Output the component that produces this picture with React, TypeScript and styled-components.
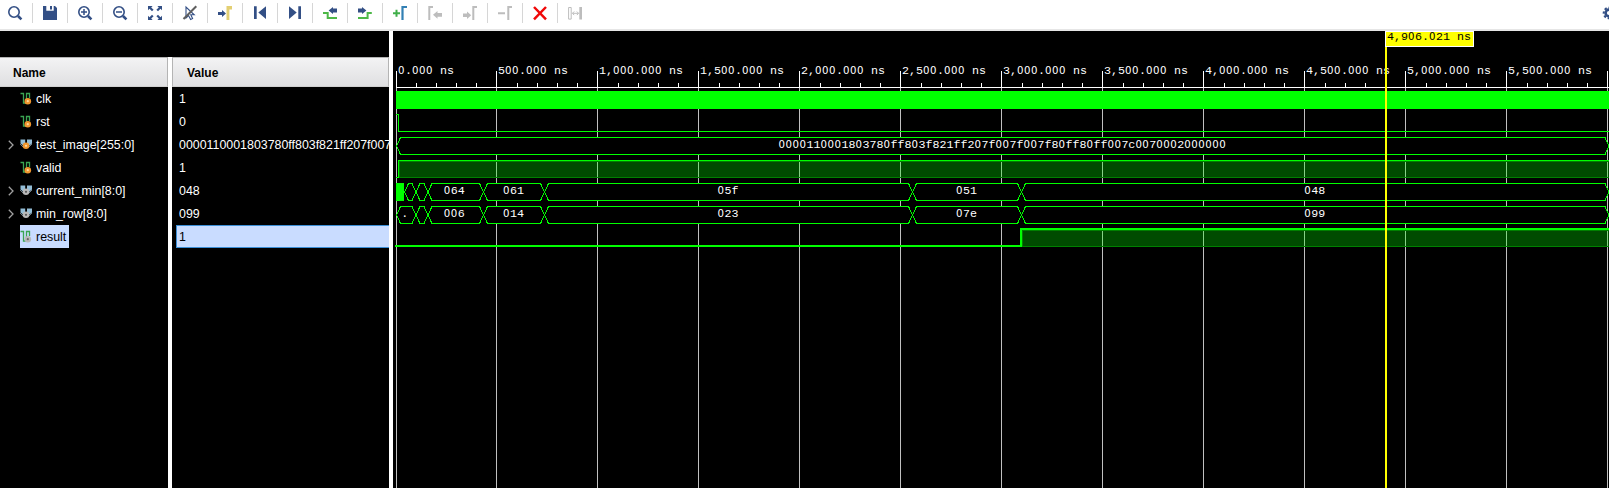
import React from 'react';
import styled, { createGlobalStyle } from 'styled-components';

const NAVY = '#334f85';
const GREY = '#bdbdbd';
const LIME = '#00ff00';
const ORANGE = '#f0962e';
const SILVER = '#b9b9b9';

const GlobalStyle = createGlobalStyle`
  html, body { margin: 0; padding: 0; background: #000; overflow: hidden; }
  * { box-sizing: border-box; }
`;

const Window = styled.div`
  width: 1609px;
  height: 488px;
  display: flex;
  flex-direction: column;
  overflow: hidden;
  background: #000;
  font-family: 'Liberation Sans', Arial, sans-serif;
  font-size: 12.4px;
`;

const Toolbar = styled.div`
  height: 31px;
  flex: none;
  display: flex;
  padding-top: 3px;
  background: #fff;
  border-bottom: 2px solid #e6e6e6;
  overflow: hidden;
`;

const Tool = styled.div<{ $last?: boolean }>`
  flex: none;
  width: 35px;
  height: 20px;
  display: flex;
  align-items: center;
  justify-content: center;
  border-right: 1px solid ${(p) => (p.$last ? 'transparent' : '#d6d6d6')};
  &:first-child { margin-left: -2px; }
`;

const Settings = styled.div`
  flex: none;
  margin-left: auto;
  width: 7px;
  height: 20px;
  overflow: hidden;
  display: flex;
  align-items: center;
`;

const Gear = styled.svg`
  flex: none;
`;

const Main = styled.div`
  flex: 1;
  display: flex;
  min-height: 0;
`;

const Signals = styled.div`
  width: 389px;
  flex: none;
  display: flex;
  padding-top: 26px;
`;

const Column = styled.div<{ $w: number }>`
  width: ${(p) => p.$w}px;
  flex: none;
  overflow: hidden;
`;

const Divider = styled.div`
  width: 4px;
  flex: none;
  background: #fff;
`;

const Header = styled.div<{ $pad: number; $left?: boolean }>`
  height: 30px;
  padding-left: ${(p) => p.$pad}px;
  line-height: 30px;
  font-weight: bold;
  font-size: 12px;
  color: #000;
  background: linear-gradient(#f3f3f4, #dfdfe1);
  border: 1px solid #b4b4b4;
  border-bottom-color: #cfcfcf;
  border-left-width: ${(p) => (p.$left ? 1 : 0)}px;
`;

const NameRow = styled.div`
  height: 23px;
  display: flex;
  align-items: center;
`;

const Expander = styled.div`
  width: 20px;
  flex: none;
  display: flex;
  padding-left: 8px;
`;

const NameCell = styled.div<{ $selected?: boolean }>`
  height: 23px;
  display: flex;
  align-items: center;
  gap: 4px;
  padding-right: 3px;
  white-space: nowrap;
  color: ${(p) => (p.$selected ? '#000' : '#fff')};
  background: ${(p) => (p.$selected ? '#c9dcff' : 'transparent')};
`;

const ValueCell = styled.div<{ $selected?: boolean }>`
  height: 23px;
  line-height: 21px;
  margin-left: 4px;
  padding: 1px 0 0 2px;
  white-space: nowrap;
  border: 1px solid ${(p) => (p.$selected ? '#3b8ed6' : 'transparent')};
  border-right: 0;
  color: ${(p) => (p.$selected ? '#000' : '#fff')};
  background: ${(p) => (p.$selected ? '#c9dcff' : 'transparent')};
`;

const Wave = styled.svg`
  display: block;
  flex: none;
`;

const MonoText = styled.text`
  font-family: 'Liberation Mono', monospace;
  font-size: 11.67px;
  white-space: pre;
`;

const Zero = styled.tspan`
  font-family: 'DejaVu Sans', sans-serif;
  font-size: 10.2px;
  letter-spacing: 0.51px;
`;

const Glyph = ({ children }: { children: React.ReactNode }) => (
  <svg width="16" height="16" viewBox="0 0 16 16" fill="none">{children}</svg>
);

const Lens = ({ sign }: { sign?: string }) => (
  <Glyph>
    <circle cx="7" cy="7" r="5.2" stroke={NAVY} strokeWidth="1.6" />
    <path d="M11 11l3.4 3.4" stroke={NAVY} strokeWidth="2.6" />
    {sign && <path d={sign} stroke={NAVY} strokeWidth="1.5" />}
  </Glyph>
);

const tools: React.ReactNode[] = [
  <Lens />,
  <Glyph>
    <path d="M1 1h3.3v4.8h7.4V1H13l2 2v12H1z" fill={NAVY} />
    <path d="M8 1h2v3.4H8z" fill={NAVY} />
  </Glyph>,
  <Lens sign="M4 7h6M7 4v6" />,
  <Lens sign="M4 7h6" />,
  <Glyph>
    <path d="M1 1h4.6L4.2 2.4 6.6 4.8 5 6.2 2.5 3.8 1 5.3zM15 1h-4.6l1.4 1.4-2.4 2.4L11 6.2l2.5-2.4L15 5.3zM1 15h4.6l-1.4-1.4 2.4-2.4L5 9.8l-2.5 2.4L1 10.7zM15 15h-4.6l1.4-1.4-2.4-2.4L11 9.8l2.5 2.4 1.5-1.5z" fill={NAVY} />
  </Glyph>,
  <Glyph>
    <path d="M4 2v11l2.6-2.4 2 3.8 2-1-1.8-3.6h3.4z" stroke={NAVY} strokeWidth="1.1" />
    <path d="M1.5 14L14.3 1.2" stroke="#5f5f5f" strokeWidth="2" />
  </Glyph>,
  <Glyph>
    <path d="M1 7h4V5l4 3.5L5 12v-2H1z" fill={NAVY} />
    <path d="M9.5 1H15v3.4h-2.6V15H9.5z" fill="#e3cf73" />
  </Glyph>,
  <Glyph>
    <path d="M2 1.3h2.7v12.6H2zM14 1.3v12.6L6.3 7.6z" fill={NAVY} />
  </Glyph>,
  <Glyph>
    <path d="M11.3 1.3H14v12.6h-2.7zM2 1.3v12.6l7.7-6.3z" fill={NAVY} />
  </Glyph>,
  <Glyph>
    <path d="M1 8h4.7v5H15" stroke="#4db848" strokeWidth="2" />
    <path d="M15 3.600v3.800h-4V9L6.600 5.500 11 2v1.600z" fill={NAVY} />
  </Glyph>,
  <Glyph>
    <path d="M1 13h9.6V8h4.2" stroke="#4db848" strokeWidth="2" />
    <path d="M1 3.600v3.800h4V9l4.400-3.500L5 2v1.600z" fill={NAVY} />
  </Glyph>,
  <Glyph>
    <path d="M1 8.3h7M4.5 4.8v7" stroke="#3fae49" strokeWidth="2" />
    <path d="M10.5 15V2H15" stroke="#3380b4" strokeWidth="2.2" />
  </Glyph>,
  <Glyph>
    <path d="M2.3 15V2H6" stroke={GREY} strokeWidth="2" />
    <path d="M15 8v3.700h-4.500v2L6 9.800l4.500-3.900V8z" fill={GREY} />
  </Glyph>,
  <Glyph>
    <path d="M11.3 15V2H15" stroke={GREY} strokeWidth="2" />
    <path d="M1 8.4v3.600h4v2l4.200-3.800L5 6.400v2z" fill={GREY} />
  </Glyph>,
  <Glyph>
    <path d="M11.3 15V2H15M1 8.3h7" stroke={GREY} strokeWidth="2" />
  </Glyph>,
  <Glyph>
    <path d="M2 2l12 12.4M14 2L2 14.4" stroke="#f00808" strokeWidth="2.5" />
  </Glyph>,
  <Glyph>
    <path d="M1.6 2.5h2.6v11.6H1.6z" stroke={GREY} strokeWidth="1" />
    <path d="M12.3 2H15v12.5h-2.7z" fill={GREY} />
    <path d="M5.5 8.3h6M7.2 6.5L5.4 8.3l1.8 1.8M9.8 6.5l1.8 1.8-1.8 1.8" stroke={GREY} strokeWidth="1" />
  </Glyph>,
];

const ScalarIcon = ({ dot }: { dot: string }) => (
  <svg width="12" height="13" viewBox="0 0 12 13" fill="none">
    <path d="M.5 1.5h3v9.500h3V1.500h3V6" stroke="#3aa552" strokeWidth="1.300" />
    <circle cx="7.8" cy="9.2" r="3.3" fill={dot} />
    <circle cx="7.8" cy="9.2" r="1.1" fill={dot === ORANGE ? '#ffd9a0' : '#666'} />
  </svg>
);

const BusIcon = ({ dot }: { dot: string }) => (
  <svg width="12" height="13" viewBox="0 0 12 13" fill="none">
    <path d="M.5 1.5h4.7v6H3L.5 5.5zM7 1.5h5v4L9.5 7.5H7z" fill="#93bdd6" />
    <path d="M0 6l3 3M12 6L9 9" stroke="#6d7b83" strokeWidth="1" />
    <circle cx="6" cy="7.8" r="3.3" fill={dot} />
    <circle cx="6" cy="7.8" r="1.1" fill={dot === ORANGE ? '#ffd9a0' : '#555'} />
  </svg>
);

interface Signal {
  name: string;
  value: string;
  bus?: boolean;
  dot: string;
  selected?: boolean;
}

const signals: Signal[] = [
  { name: 'clk', value: '1', dot: ORANGE },
  { name: 'rst', value: '0', dot: ORANGE },
  { name: 'test_image[255:0]', value: '0000110001803780ff803f821ff207f007f007f80ff80ff007c0070002000000', bus: true, dot: ORANGE },
  { name: 'valid', value: '1', dot: ORANGE },
  { name: 'current_min[8:0]', value: '048', bus: true, dot: SILVER },
  { name: 'min_row[8:0]', value: '099', bus: true, dot: SILVER },
  { name: 'result', value: '1', dot: SILVER, selected: true },
];

/* The wave area's x axis uses window pixels, so its viewBox starts at x=393, y=31. */
const majors = [396, 496, 597, 698, 799, 900, 1001, 1102, 1203, 1304, 1405, 1506, 1607];

const timeLabel = (i: number) => `${(i * 500).toLocaleString('en-US')}.000 ns`;

const Mono = ({ x, y, fill = '#fff', middle, children }: { x: number; y: number; fill?: string; middle?: boolean; children: string }) => (
  <MonoText x={middle ? x - children.length * 3.5 : x} y={y} fill={fill}>
    {children.split(/(0+)/).filter(Boolean).map((part, i) =>
      part[0] === '0' ? <Zero key={i}>{part}</Zero> : <tspan key={i}>{part}</tspan>
    )}
  </MonoText>
);

interface Segment { from: number; to: number; label?: string }

const END = 1609;

const Bus = ({ y, segments }: { y: number; segments: Segment[] }) => (
  <g>
    {segments.map(({ from, to, label }) => {
      const h = 17;
      const d = `M${from} ${y + h / 2}L${from + 4} ${y}H${to - 4}L${to} ${y + h / 2}L${to - 4} ${y + h}H${from + 4}Z`;
      return (
        <g key={from}>
          <path d={d} fill="#000" stroke={LIME} shapeRendering="crispEdges" />
          {label && <Mono x={(from + to) / 2 - (from < 430 ? 1.5 : 0.5)} y={y + 10} middle>{label}</Mono>}
        </g>
      );
    })}
  </g>
);

const Waveform = () => (
  <Wave width="1216" height="457" viewBox="393 31 1216 457">
    <g shapeRendering="crispEdges">
      {majors.map((x) => (
        <React.Fragment key={x}>
          <rect x={x} y="88" width="1" height="400" fill="#c0c0c0" />
          <rect x={x} y="71" width="1" height="17" fill="#fff" />
          {x < 1600 && [0, 1, 2, 3].map((k) => (
            <rect key={k} x={x + (x === 396 ? 20 : 21) + k * 20} y="83" width="1" height="4" fill="#fff" />
          ))}
        </React.Fragment>
      ))}
      <rect x="396" y="87" width="1213" height="1" fill="#fff" />
    </g>
    {majors.slice(0, 12).map((x, i) => <Mono key={x} x={x + 2} y={74}>{timeLabel(i)}</Mono>)}

    <g shapeRendering="crispEdges">
      <rect x="396" y="91" width="1213" height="18" fill={LIME} />
      <path d="M396 114.5H398.5V131.5H1609" fill="none" stroke={LIME} />
      <rect x="399" y="161" width="1210" height="16" fill="rgba(0,255,0,.294)" />
      <path d="M399.5 177V161.5H1609" fill="none" stroke="#008000" />
      <path d="M399 177.5H1609" stroke="#008000" />
      <path d="M396 177.5H398.5V160.5H1609" fill="none" stroke={LIME} />
      <rect x="396" y="183" width="8" height="18" fill={LIME} />
      <rect x="1022" y="230" width="587" height="16" fill="rgba(0,255,0,.294)" />
      <path d="M1022.5 246V230.5H1609M1022 246.5H1609" fill="none" stroke="#008000" />
      <path d="M395 246H1021V229H1609" fill="none" stroke={LIME} strokeWidth="2" />
    </g>
    <Bus y={137.5} segments={[{ from: 396.5, to: END }]} />
    <Mono x={1002.5} y={147.5} middle>{signals[2].value}</Mono>
    <Bus
      y={183.5}
      segments={[
        { from: 404.5, to: 416 },
        { from: 416, to: 428 },
        { from: 428, to: 483.5, label: '064' },
        { from: 483.5, to: 544.5, label: '061' },
        { from: 544.5, to: 912.5, label: '05f' },
        { from: 912.5, to: 1021.5, label: '051' },
        { from: 1021.5, to: END, label: '048' },
      ]}
    />
    <Bus
      y={206.5}
      segments={[
        { from: 396.5, to: 416, label: '.' },
        { from: 416, to: 428 },
        { from: 428, to: 483.5, label: '006' },
        { from: 483.5, to: 544.5, label: '014' },
        { from: 544.5, to: 912.5, label: '023' },
        { from: 912.5, to: 1021.5, label: '07e' },
        { from: 1021.5, to: END, label: '099' },
      ]}
    />
    <g shapeRendering="crispEdges">
      <rect x="1385" y="31" width="2" height="457" fill="#ffff00" />
      <rect x="1385.5" y="31.5" width="88" height="15" fill="#ffff00" stroke="#fff" />
    </g>
    <Mono x={1387} y={40} fill="#000">4,906.021 ns</Mono>
  </Wave>
);

export default function App() {
  return (
    <Window>
      <GlobalStyle />
      <Toolbar>
        {tools.map((icon, i) => <Tool key={i} $last={i === tools.length - 1}>{icon}</Tool>)}
        <Settings>
          <Gear width="14" height="14" viewBox="0 0 14 14">
            <circle cx="7" cy="7" r="3.4" fill="none" stroke={NAVY} strokeWidth="2.6" />
            <circle cx="7" cy="7" r="5.3" fill="none" stroke={NAVY} strokeWidth="2" strokeDasharray="2.3 1.863" strokeDashoffset="1.15" />
          </Gear>
        </Settings>
      </Toolbar>
      <Main>
        <Signals>
          <Column $w={168}>
            <Header $pad={13}>Name</Header>
            {signals.map((s) => (
              <NameRow key={s.name}>
                <Expander>
                  {s.bus && (
                    <svg width="6" height="10" viewBox="0 0 6 10" fill="none">
                      <path d="M.8 .8L5 5 .8 9.2" stroke="#a0a0a0" strokeWidth="1.3" />
                    </svg>
                  )}
                </Expander>
                <NameCell $selected={s.selected}>
                  {s.bus ? <BusIcon dot={s.dot} /> : <ScalarIcon dot={s.dot} />}
                  {s.name}
                </NameCell>
              </NameRow>
            ))}
          </Column>
          <Divider />
          <Column $w={217}>
            <Header $pad={14} $left>Value</Header>
            {signals.map((s) => <ValueCell key={s.name} $selected={s.selected}>{s.value}</ValueCell>)}
          </Column>
        </Signals>
        <Divider />
        <Waveform />
      </Main>
    </Window>
  );
}
